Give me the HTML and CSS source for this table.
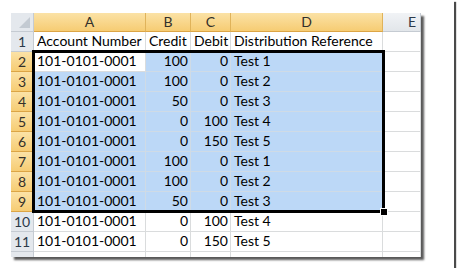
FILE: index.html
```html
<!DOCTYPE html>
<html>
<head>
<meta charset="utf-8">
<link rel="stylesheet" href="styles.css">
</head>
<body>
<div class="page">
  <div class="sheet">
    <div class="grid">
      <div class="hd corner"><span class="tri"></span></div>
      <div class="hd col on">A</div>
      <div class="hd col on">B</div>
      <div class="hd col on">C</div>
      <div class="hd col on">D</div>
      <div class="hd col e">E</div>

      <div class="hd row">1</div>
      <div class="c">Account Number</div>
      <div class="c">Credit</div>
      <div class="c">Debit</div>
      <div class="c">Distribution Reference</div>
      <div class="c"></div>

      <div class="hd row on">2</div>
      <div class="c active">101-0101-0001</div>
      <div class="c s n">100</div>
      <div class="c s n">0</div>
      <div class="c s">Test 1</div>
      <div class="c"></div>

      <div class="hd row on">3</div>
      <div class="c s">101-0101-0001</div>
      <div class="c s n">100</div>
      <div class="c s n">0</div>
      <div class="c s">Test 2</div>
      <div class="c"></div>

      <div class="hd row on">4</div>
      <div class="c s">101-0101-0001</div>
      <div class="c s n">50</div>
      <div class="c s n">0</div>
      <div class="c s">Test 3</div>
      <div class="c"></div>

      <div class="hd row on">5</div>
      <div class="c s">101-0101-0001</div>
      <div class="c s n">0</div>
      <div class="c s n">100</div>
      <div class="c s">Test 4</div>
      <div class="c"></div>

      <div class="hd row on">6</div>
      <div class="c s">101-0101-0001</div>
      <div class="c s n">0</div>
      <div class="c s n">150</div>
      <div class="c s">Test 5</div>
      <div class="c"></div>

      <div class="hd row on">7</div>
      <div class="c s">101-0101-0001</div>
      <div class="c s n">100</div>
      <div class="c s n">0</div>
      <div class="c s">Test 1</div>
      <div class="c"></div>

      <div class="hd row on">8</div>
      <div class="c s">101-0101-0001</div>
      <div class="c s n">100</div>
      <div class="c s n">0</div>
      <div class="c s">Test 2</div>
      <div class="c"></div>

      <div class="hd row on">9</div>
      <div class="c s">101-0101-0001</div>
      <div class="c s n">50</div>
      <div class="c s n">0</div>
      <div class="c s">Test 3</div>
      <div class="c"></div>

      <div class="hd row">10</div>
      <div class="c">101-0101-0001</div>
      <div class="c n">0</div>
      <div class="c n">100</div>
      <div class="c">Test 4</div>
      <div class="c"></div>

      <div class="hd row">11</div>
      <div class="c">101-0101-0001</div>
      <div class="c n">0</div>
      <div class="c n">150</div>
      <div class="c">Test 5</div>
      <div class="c"></div>

      <div class="hd row"></div>
      <div class="c"></div>
      <div class="c"></div>
      <div class="c"></div>
      <div class="c"></div>
      <div class="c"></div>
    </div>
    <div class="sel"><span class="handle"></span></div>
  </div>
</div>
</body>
</html>
```

FILE: styles.css
```css
html, body {
  margin: 0;
  padding: 0;
  background: #ffffff;
}

.page {
  width: 454px;
  height: 268px;
  background: #ffffff;
  box-shadow: 2px 2px 1px #4a4a4a;
  padding: 13px 0 0 11px;
  box-sizing: border-box;
}

.sheet {
  position: relative;
  width: 410px;
  height: 244px;
  overflow: hidden;
  background: #ffffff;
  box-shadow: 3px 3px 2px rgba(0, 0, 0, 0.65);
  font-family: Lato, "Liberation Sans", sans-serif;
  font-size: 14px;
  color: #000000;
}

.grid {
  display: grid;
  grid-template-columns: 23px 112px 45px 40px 152px 38px;
  grid-template-rows: 19px repeat(12, 20px);
}

.grid > div {
  box-sizing: border-box;
  border-right: 1px solid #dadcdd;
  border-bottom: 1px solid #dadcdd;
  display: flex;
  align-items: flex-end;
  padding: 0 2px 2px 3px;
  white-space: nowrap;
  overflow: hidden;
  line-height: 16px;
}

.grid > .hd {
  justify-content: center;
  align-items: center;
  padding: 0;
  color: #2b3a4a;
  background: linear-gradient(#f1f3f6, #e2e6ea);
  border-right-color: #c5cbd2;
  border-bottom-color: #c5cbd2;
}

.grid > .hd.row {
  background: #e4e8ed;
  padding-top: 1px;
}

.grid > .hd.on {
  background: linear-gradient(#fbe2a6, #f6cc73);
  border-right-color: #e0b35a;
  border-bottom-color: #dca545;
  color: #33302a;
}

.grid > .hd.e {
  justify-content: flex-end;
  padding-right: 4px;
}

.grid > .corner {
  position: relative;
  background: #e4e8ed;
}

.tri {
  position: absolute;
  right: 3px;
  bottom: 3px;
  width: 0;
  height: 0;
  border-left: 11px solid transparent;
  border-bottom: 11px solid #c3cad2;
}

.grid > .s {
  background: #bcd8f7;
  border-right-color: #cfdbe6;
  border-bottom-color: #cfdbe6;
}

.grid > .active {
  background: #ffffff;
}

.grid > .n {
  justify-content: flex-end;
}

.sel {
  position: absolute;
  left: 21px;
  top: 37px;
  width: 353px;
  height: 163px;
  box-sizing: border-box;
  border: 3px solid #000000;
}

.handle {
  position: absolute;
  right: -6px;
  bottom: -6px;
  width: 6px;
  height: 6px;
  background: #000000;
  border: 1px solid #ffffff;
}
```
